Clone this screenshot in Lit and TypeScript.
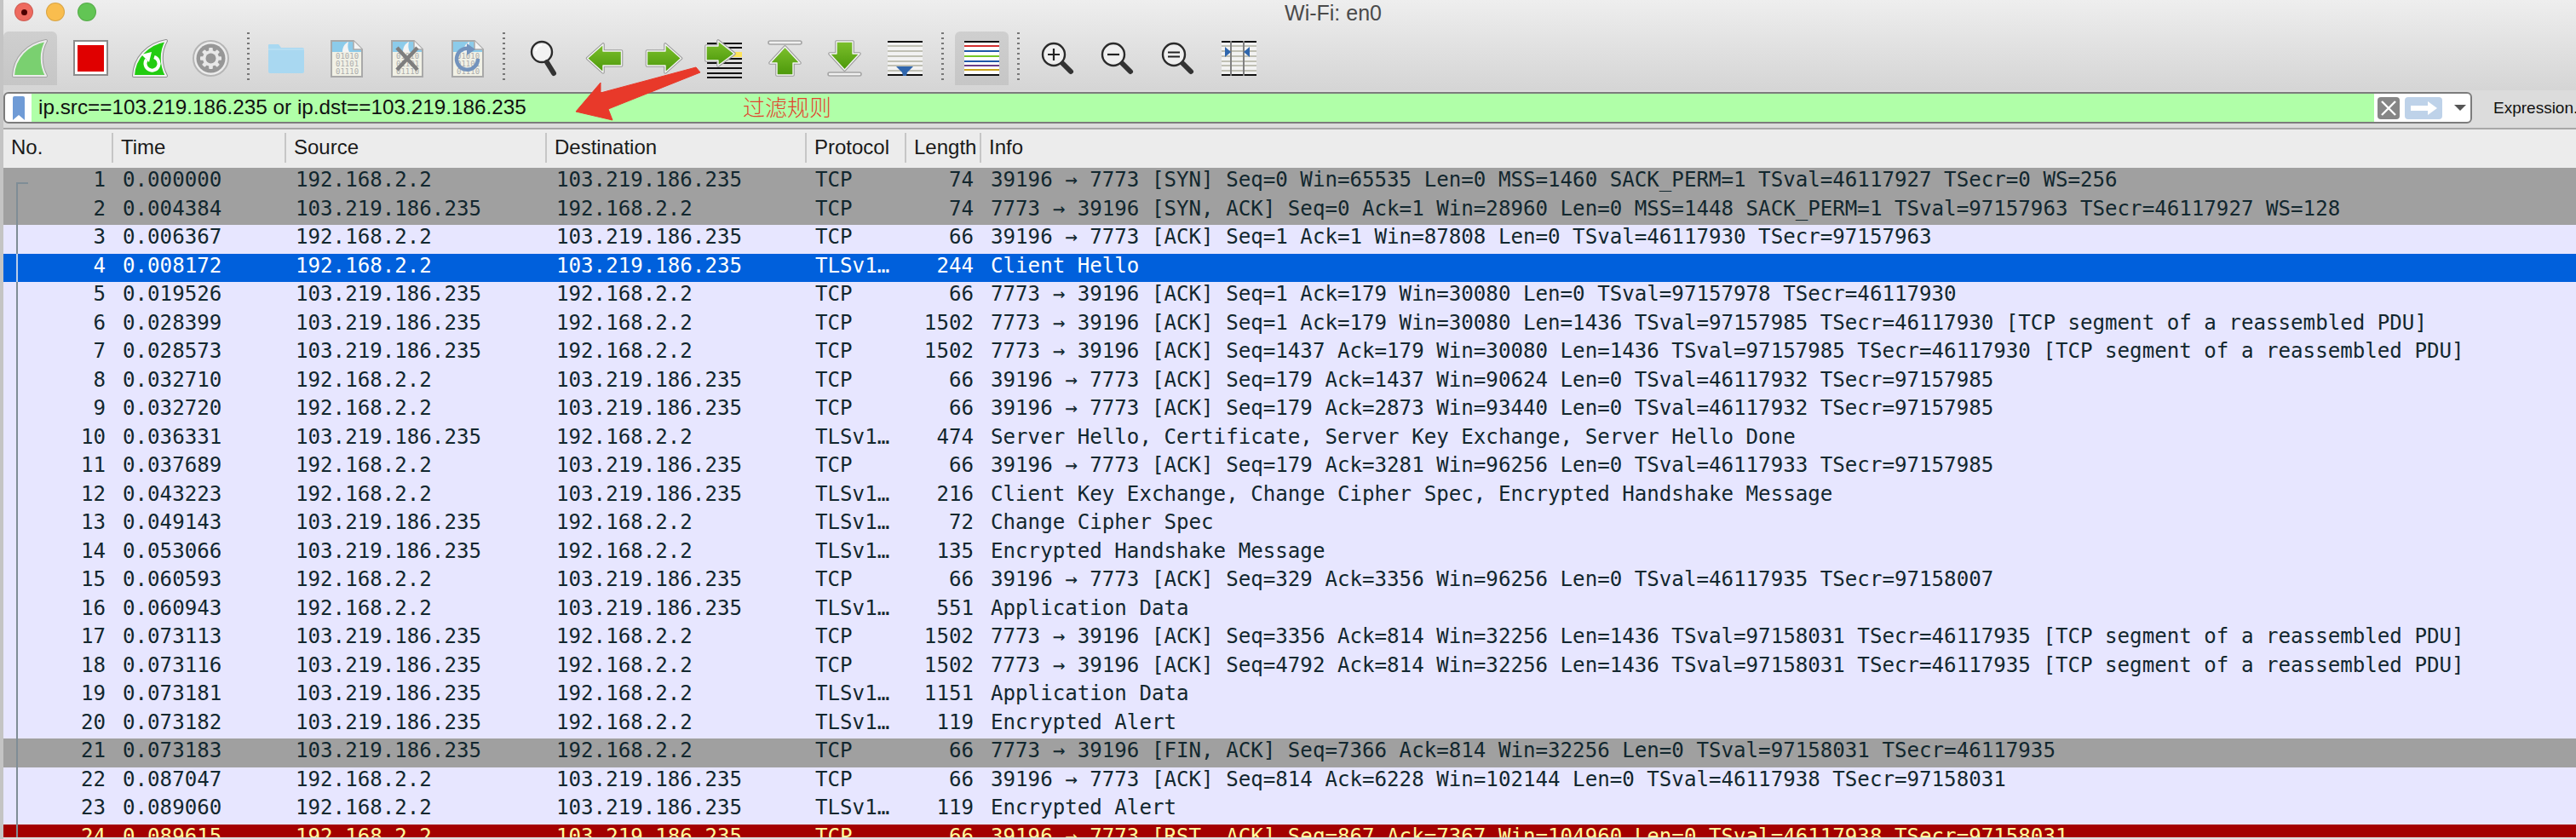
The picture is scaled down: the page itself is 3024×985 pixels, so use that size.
import { LitElement, html, css, svg } from "lit";
import { customElement } from "lit/decorators.js";

type Kind = "n" | "g" | "s" | "r";
const A = "192.168.2.2";
const B = "103.219.186.235";
const rows: [number, string, string, string, string, number, string, Kind?][] = [
  [1, "0.000000", A, B, "TCP", 74, "39196 → 7773 [SYN] Seq=0 Win=65535 Len=0 MSS=1460 SACK_PERM=1 TSval=46117927 TSecr=0 WS=256", "g"],
  [2, "0.004384", B, A, "TCP", 74, "7773 → 39196 [SYN, ACK] Seq=0 Ack=1 Win=28960 Len=0 MSS=1448 SACK_PERM=1 TSval=97157963 TSecr=46117927 WS=128", "g"],
  [3, "0.006367", A, B, "TCP", 66, "39196 → 7773 [ACK] Seq=1 Ack=1 Win=87808 Len=0 TSval=46117930 TSecr=97157963"],
  [4, "0.008172", A, B, "TLSv1…", 244, "Client Hello", "s"],
  [5, "0.019526", B, A, "TCP", 66, "7773 → 39196 [ACK] Seq=1 Ack=179 Win=30080 Len=0 TSval=97157978 TSecr=46117930"],
  [6, "0.028399", B, A, "TCP", 1502, "7773 → 39196 [ACK] Seq=1 Ack=179 Win=30080 Len=1436 TSval=97157985 TSecr=46117930 [TCP segment of a reassembled PDU]"],
  [7, "0.028573", B, A, "TCP", 1502, "7773 → 39196 [ACK] Seq=1437 Ack=179 Win=30080 Len=1436 TSval=97157985 TSecr=46117930 [TCP segment of a reassembled PDU]"],
  [8, "0.032710", A, B, "TCP", 66, "39196 → 7773 [ACK] Seq=179 Ack=1437 Win=90624 Len=0 TSval=46117932 TSecr=97157985"],
  [9, "0.032720", A, B, "TCP", 66, "39196 → 7773 [ACK] Seq=179 Ack=2873 Win=93440 Len=0 TSval=46117932 TSecr=97157985"],
  [10, "0.036331", B, A, "TLSv1…", 474, "Server Hello, Certificate, Server Key Exchange, Server Hello Done"],
  [11, "0.037689", A, B, "TCP", 66, "39196 → 7773 [ACK] Seq=179 Ack=3281 Win=96256 Len=0 TSval=46117933 TSecr=97157985"],
  [12, "0.043223", A, B, "TLSv1…", 216, "Client Key Exchange, Change Cipher Spec, Encrypted Handshake Message"],
  [13, "0.049143", B, A, "TLSv1…", 72, "Change Cipher Spec"],
  [14, "0.053066", B, A, "TLSv1…", 135, "Encrypted Handshake Message"],
  [15, "0.060593", A, B, "TCP", 66, "39196 → 7773 [ACK] Seq=329 Ack=3356 Win=96256 Len=0 TSval=46117935 TSecr=97158007"],
  [16, "0.060943", A, B, "TLSv1…", 551, "Application Data"],
  [17, "0.073113", B, A, "TCP", 1502, "7773 → 39196 [ACK] Seq=3356 Ack=814 Win=32256 Len=1436 TSval=97158031 TSecr=46117935 [TCP segment of a reassembled PDU]"],
  [18, "0.073116", B, A, "TCP", 1502, "7773 → 39196 [ACK] Seq=4792 Ack=814 Win=32256 Len=1436 TSval=97158031 TSecr=46117935 [TCP segment of a reassembled PDU]"],
  [19, "0.073181", B, A, "TLSv1…", 1151, "Application Data"],
  [20, "0.073182", B, A, "TLSv1…", 119, "Encrypted Alert"],
  [21, "0.073183", B, A, "TCP", 66, "7773 → 39196 [FIN, ACK] Seq=7366 Ack=814 Win=32256 Len=0 TSval=97158031 TSecr=46117935", "g"],
  [22, "0.087047", A, B, "TCP", 66, "39196 → 7773 [ACK] Seq=814 Ack=6228 Win=102144 Len=0 TSval=46117938 TSecr=97158031"],
  [23, "0.089060", A, B, "TLSv1…", 119, "Encrypted Alert"],
  [24, "0.089615", A, B, "TCP", 66, "39196 → 7773 [RST, ACK] Seq=867 Ack=7367 Win=104960 Len=0 TSval=46117938 TSecr=97158031", "r"],
];

const FIN = "M12 52 C13 31 28 15 50 11 C43 23 43 39 50 52 Z";
const wrap = (c: unknown) => html`<svg class="ico" viewBox="0 0 63 63" width="63" height="63">${c}</svg>`;

const grad = (id: string) => svg`<defs><linearGradient id=${id} x1="0" y1="0" x2="0" y2="1"><stop offset="0" stop-color="#7cc02c"/><stop offset="1" stop-color="#4c980a"/></linearGradient></defs>`;
const arrow = (points: string, id: string) => svg`${grad(id)}<polygon points=${points} fill="none" stroke="#9c9c9c" stroke-width="3.6" stroke-linejoin="round"/><polygon points=${points} fill=${`url(#${id})`} stroke="#f4f4f4" stroke-width="1.4" stroke-linejoin="round"/>`;

const filePage = (inner: unknown) => svg`
  <path d="M14 11 H40 L50 21 V53 H14 Z" fill="#f1f1e6" stroke="#a9a9a9" stroke-width="2"/>
  <path d="M15 12 H39 L49 21 V24 H15 Z" fill="#8ccbea"/>
  <path d="M27 24 C27 18 30 14 34 12 C33 16 33 20 35 24 Z" fill="#f4f4f4"/>
  <path d="M40 11 V21 H50" fill="#f4f4f4" stroke="#a9a9a9" stroke-width="1.5"/>
  <g class="bin"><text x="19" y="32">01010</text><text x="19" y="41">01101</text><text x="19" y="50">01110</text></g>
  ${inner}`;

const mag = (glyph: unknown, cx = 26, cy = 27, r = 13) => svg`
  <circle cx=${cx} cy=${cy} r=${r} fill="#efefef" stroke="#2b2b2b" stroke-width="2.4"/>
  <line x1=${cx + 11} y1=${cy + 11} x2=${cx + 20} y2=${cy + 20} stroke="#333" stroke-width="6" stroke-linecap="round"/>
  ${glyph}`;

const hline = (y: number, c: string, h = 2) => svg`<rect x="11" y=${y} width="41" height=${h} fill=${c}/>`;

const icons = [
  wrap(svg`<path d=${FIN} fill="none" stroke="#a3a3a3" stroke-width="4" stroke-linejoin="round"/><path d=${FIN} fill="#7ad070" stroke="#ececec" stroke-width="2" stroke-linejoin="round"/>`),
  wrap(svg`<rect x="12" y="11" width="39" height="40" fill="#fff" stroke="#8c8c8c" stroke-width="2"/><rect x="16" y="16" width="31" height="31" fill="#e00000"/>`),
  wrap(svg`<path d=${FIN} fill="none" stroke="#8d8d8d" stroke-width="4" stroke-linejoin="round"/><path d=${FIN} fill="#22cc11" stroke="#f2f2f2" stroke-width="2" stroke-linejoin="round"/><path d="M36 30 A8 8 0 1 1 27 33" fill="none" stroke="#fff" stroke-width="4"/><polygon points="21,27 33,24 30,36" fill="#fff"/>`),
  wrap(svg`<circle cx="31.5" cy="31.5" r="20.5" fill="#ececec" stroke="#b5b5b5" stroke-width="2"/><circle cx="31.5" cy="31.5" r="17" fill="#979797"/>
    ${[0, 45, 90, 135].map((a) => svg`<rect x="29.2" y="19" width="4.6" height="25" rx="1" fill="#e8e8e8" transform=${`rotate(${a} 31.5 31.5)`}/>`)}
    <circle cx="31.5" cy="31.5" r="9.5" fill="#e8e8e8"/><circle cx="31.5" cy="31.5" r="6" fill="#979797"/>`),
  wrap(svg`<path d="M11 16 Q11 15 12 15 H23 L26 19 H51 Q53 19 53 21 V47 Q53 49 51 49 H13 Q11 49 11 47 Z" fill="#a9d8f1"/><rect x="11" y="20" width="42" height="2" fill="#b6def3"/>`),
  wrap(filePage(svg``)),
  wrap(filePage(svg`<path d="M20 19 L44 45 M44 19 L20 45" stroke="#7e7e7e" stroke-width="4.5"/>`)),
  wrap(filePage(svg`<path d="M37 21 A12.5 12.5 0 1 0 44 32" fill="none" stroke="#7393bd" stroke-width="4.5"/><polygon points="31,14 31,28 41,21" fill="#7393bd"/>`)),
  wrap(svg`<circle cx="29" cy="24" r="12" fill="#f2f2f2" stroke="#2b2b2b" stroke-width="2.4"/><path d="M22 23 A8 8 0 0 1 29 16" fill="none" stroke="#fff" stroke-width="2"/><line x1="35" y1="36" x2="43" y2="49" stroke="#333" stroke-width="6" stroke-linecap="round"/>`),
  wrap(arrow("11.5,31.5 30,15 30,23 51.5,23 51.5,40 30,40 30,48", "gl")),
  wrap(arrow("51.5,31.5 33,15 33,23 11.5,23 11.5,40 33,40 33,48", "gr")),
  wrap(svg`${[13, 18, 31, 36, 42, 48, 53].map((y) => hline(y, "#111"))}<rect x="34" y="24" width="18" height="6" fill="#fde35c"/>
    ${arrow("43,26 24,11 24,17 10,17 10,34 24,34 24,40", "gp")}`),
  wrap(svg`<rect x="12" y="11" width="39" height="4" rx="2" fill="#f0f0f0" stroke="#a5a5a5" stroke-width="1.6"/>${arrow("31.5,18 49,37 41,37 41,51 22,51 22,37 14,37", "gu")}`),
  wrap(svg`<rect x="12" y="48" width="39" height="4" rx="2" fill="#f0f0f0" stroke="#a5a5a5" stroke-width="1.6"/>${arrow("31.5,45 49,26 41,26 41,12 22,12 22,26 14,26", "gd")}`),
  wrap(svg`<rect x="11" y="12" width="41" height="40" fill="#f2f2f2"/>${hline(11, "#111")}${[16, 22, 28, 34, 39, 45].map((y) => hline(y, "#c0c0b4"))}${hline(50, "#111")}<polygon points="21,41 41,41 34,48 33,52 29,52 28,48" fill="#2f66ad"/>`),
  wrap(svg`<rect x="11" y="11" width="41" height="41" fill="#fff"/>${hline(11, "#111")}${hline(16, "#d32f2f")}${hline(22, "#1f57a8")}${hline(28, "#76c726")}${hline(34, "#1f57a8")}${hline(39, "#6a3d88")}${hline(44, "#c9a21b")}${hline(50, "#111")}`),
  wrap(mag(svg`<path d="M19 27 H33 M26 20 V34" stroke="#222" stroke-width="2.2"/>`)),
  wrap(mag(svg`<path d="M19 27 H33" stroke="#222" stroke-width="2.2"/>`)),
  wrap(mag(svg`<path d="M19 24.5 H33 M19 29.5 H33" stroke="#222" stroke-width="2.2"/>`)),
  wrap(svg`<rect x="11" y="12" width="41" height="40" fill="#f2f2f2"/>${hline(11, "#111")}${[16, 22, 28, 34, 39, 45].map((y) => hline(y, "#c0c0b4"))}${hline(50, "#111")}
    <rect x="21" y="11" width="2" height="41" fill="#808080"/><rect x="36" y="11" width="2" height="41" fill="#808080"/>
    <polygon points="15,18 15,30 22,24" fill="#2f66ad"/><polygon points="44,18 44,30 37,24" fill="#2f66ad"/>`),
];

@customElement("app-root")
export class AppRoot extends LitElement {
  static styles = css`
    :host { display: block; width: 3024px; height: 985px; overflow: hidden; background: #c4c4c4; }
    .win { margin-left: 4px; height: 985px; display: flex; flex-direction: column; position: relative; }
    .top { height: 106px; background: linear-gradient(#eeeeee, #d5d5d5); flex: none; }
    .title { height: 37px; position: relative; display: flex; align-items: flex-start; }
    .lights { display: flex; gap: 15px; padding: 3px 0 0 13px; }
    .light { width: 22px; height: 22px; border-radius: 50%; box-sizing: border-box; border: 1px solid rgba(0,0,0,.12); display: flex; align-items: center; justify-content: center; }
    .light.r { background: #ee6a5f; } .light.y { background: #f9bd4e; } .light.g { background: #62c554; }
    .light i { width: 7px; height: 7px; border-radius: 50%; background: #4d0000; }
    .name { position: absolute; left: 1361px; width: 400px; text-align: center; top: 1px; font: 25px "Liberation Sans", sans-serif; color: #4a4a4a; }
    .tools { display: flex; gap: 7.7px; height: 63px; align-items: flex-start; }
    .btn { width: 63px; height: 63px; flex: none; }
    .btn.on { background: linear-gradient(#cfcfcf, #c6c6c6); border-radius: 6px 6px 0 0; }
    .ico { display: block; }
    .bin text { font: 9px "DejaVu Sans Mono", monospace; fill: #adadad; }
    .sep { width: 3px; height: 60px; margin: 1px 4px 0 3px; flex: none; background: repeating-linear-gradient(#777 0 2px, transparent 2px 6px); }
    .sep.s2 { margin-right: 6px; }
    .sep.s3 { margin-right: 5.4px; }
    .sep.s4 { margin-right: 5.5px; }
    .fbar { flex: none; height: 46px; box-sizing: border-box; background: #dcdcdc; border-bottom: 2px solid #a8a8a8; padding: 2px 0 0 0; display: flex; align-items: flex-start; position: relative; }
    .field { width: 2898px; height: 37px; box-sizing: border-box; border: 2px solid #7c7c7c; border-radius: 6px; background: #fff; display: flex; align-items: center; flex: none; overflow: hidden; }
    .mark { width: 31px; flex: none; display: flex; justify-content: center; }
    .ftext { flex: none; width: 2750px; height: 100%; background: #b0ffa8; box-sizing: border-box; padding-left: 8px; font: 24.3px/32px "Liberation Sans", sans-serif; color: #111; white-space: nowrap; }
    .clear { width: 26px; height: 26px; margin-left: 4px; flex: none; background: #868686; border-radius: 4px; display: block; }
    .apply { width: 44px; height: 26px; margin-left: 6px; flex: none; background: #bed2e9; border-radius: 4px; display: block; }
    .drop { width: 0; height: 0; margin-left: 14px; border: 7px solid transparent; border-top: 7px solid #555; border-bottom: 0; flex: none; }
    .expr { margin-left: 25px; margin-top: 8px; font: 19px "Liberation Sans", sans-serif; color: #111; white-space: nowrap; }
    .arrow { position: absolute; left: 0; top: 0; pointer-events: none; }
    .note { position: absolute; left: 868px; top: 110px; font: 26px/30px "Noto Sans CJK SC", sans-serif; font-weight: 300; color: #e0452e; white-space: nowrap; }
    .head { flex: none; height: 45px; background: #ececec; display: grid; grid-template-columns: var(--cols); font: 24px "Liberation Sans", sans-serif; color: #1a1a1a; }
    .head div { margin-top: 4px; height: 35px; line-height: 33px; border-right: 2px solid #c6c6c6; padding-left: 9px; box-sizing: border-box; white-space: nowrap; overflow: hidden; }
    .head div:last-child { border: 0; }
    .list { flex: 1; overflow: hidden; min-height: 0; background: #e7e6ff; }
    .row { height: 33.5px; display: grid; grid-template-columns: var(--cols); font: 24.15px/29px "DejaVu Sans Mono", monospace; white-space: pre; color: #12272e; position: relative; background: #e7e6ff; }
    .row > span { padding-left: 11px; overflow: hidden; }
    .row .num { text-align: right; padding: 0 9px 0 0; }
    .row .len { text-align: right; padding: 0 9px 0 0; }
    .row .proto { padding-left: 10px; }
    .row .info { padding-left: 11px; }
    .row.g { background: #a0a0a0; }
    .row.s { background: #0060dc; color: #fff; }
    .row.r { background: #a40000; color: #fffc9c; }
    .tree { position: absolute; left: 15px; top: 0; bottom: 0; width: 2px; background: #7f8d96; }
    .row.s .tree { background: #b9cdea; }
    .row.first .tree { top: 17px; }
    .row.first .tree::after { content: ""; position: absolute; left: 0; top: 0; width: 14px; height: 2px; background: #7f8d96; }
    .foot { flex: none; height: 2px; background: #dedede; }
  `;

  render() {
    const cols = "--cols: 129px 203px 306px 305px 117px 88px 1fr";
    const gi = (i: number) => html`<div class="btn ${i === 0 || i === 15 ? "on" : ""}">${icons[i]}</div>`;
    return html`<div class="win" style=${cols}>
      <div class="top">
        <div class="title">
          <div class="lights"><div class="light r"><i></i></div><div class="light y"></div><div class="light g"></div></div>
          <div class="name">Wi-Fi: en0</div>
        </div>
        <div class="tools">
          ${[0, 1, 2, 3].map(gi)}<div class="sep"></div>
          ${[4, 5, 6, 7].map(gi)}<div class="sep s2"></div>
          ${[8, 9, 10, 11, 12, 13, 14].map(gi)}<div class="sep s3"></div>
          ${gi(15)}<div class="sep s4"></div>
          ${[16, 17, 18, 19].map(gi)}
        </div>
      </div>
      <div class="fbar">
        <div class="field">
          <div class="mark"><svg width="16" height="28" viewBox="0 0 16 28"><path d="M1 2 Q1 0 3 0 H13 Q15 0 15 2 V28 L8 22 L1 28 Z" fill="#6f9bd6"/></svg></div>
          <div class="ftext">ip.src==103.219.186.235 or ip.dst==103.219.186.235</div>
          <svg class="clear" viewBox="0 0 26 26"><path d="M5 5 L21 21 M21 5 L5 21" stroke="#fff" stroke-width="2.4"/></svg>
          <svg class="apply" viewBox="0 0 44 26"><path d="M7 10 H27 V5 L38 13 L27 21 V16 H7 Z" fill="#fff"/></svg>
          <div class="drop"></div>
        </div>
        <div class="expr">Expression...</div>
      </div>
      <div class="head">
        <div>No.</div><div>Time</div><div>Source</div><div>Destination</div><div>Protocol</div><div>Length</div><div>Info</div>
      </div>
      <div class="list">
        ${rows.map(([n, t, s, d, p, l, info, k], i) => html`<div class="row ${k ?? ""} ${i === 0 ? "first" : ""}">
          <i class="tree"></i>
          <span class="num">${n}</span><span>${t}</span><span>${s}</span><span>${d}</span><span class="proto">${p}</span><span class="len">${l}</span><span class="info">${info}</span>
        </div>`)}
      </div>
      <div class="foot"></div>
      <svg class="arrow" width="900" height="160"><polygon transform="translate(-4 0)" points="676,131 705,97 705,109 817,79 822,85 714,128 719,141" fill="#e8392a" stroke="#e8392a" stroke-width="1" stroke-linejoin="round"/></svg>
      <div class="note">过滤规则</div>
    </div>`;
  }
}
